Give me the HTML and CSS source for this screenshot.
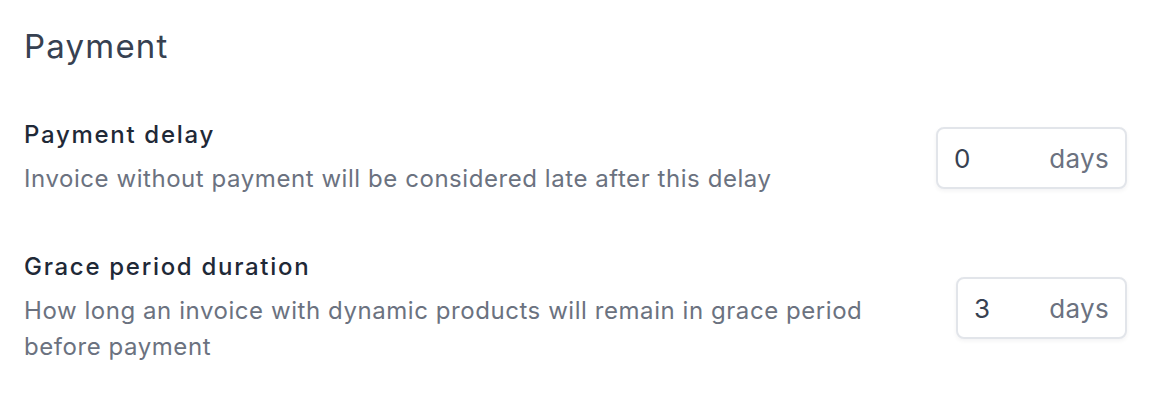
FILE: index.html
```html
<!DOCTYPE html>
<html lang="en">
<head>
<meta charset="utf-8">
<title>Payment settings</title>
<link rel="stylesheet" href="styles.css">
</head>
<body>
<section class="settings">
  <h2 class="settings__title">Payment</h2>
  <div class="settings__rows">
    <div class="setting">
      <div class="setting__text">
        <div class="setting__label">Payment delay</div>
        <p class="setting__desc">Invoice without payment will be considered late after this delay</p>
      </div>
      <div class="field field--wide">
        <span class="field__value">0</span>
        <span class="field__unit">days</span>
      </div>
    </div>
    <div class="setting">
      <div class="setting__text">
        <div class="setting__label">Grace period duration</div>
        <p class="setting__desc">How long an invoice with dynamic products will remain in grace period before payment</p>
      </div>
      <div class="field field--narrow">
        <span class="field__value">3</span>
        <span class="field__unit">days</span>
      </div>
    </div>
  </div>
</section>
</body>
</html>
```

FILE: styles.css
```css
* { box-sizing: border-box; }

html, body {
  margin: 0;
  background: #ffffff;
}

body {
  font-family: Inter, "Noto Sans", sans-serif;
  -webkit-font-smoothing: antialiased;
}

.settings {
  padding: 26px 39px 0 24px;
}

.settings__title {
  margin: 0;
  font-size: 33px;
  line-height: 40px;
  font-weight: 400;
  letter-spacing: 1.2px;
  color: #374151;
}

.settings__rows {
  display: flex;
  flex-direction: column;
  gap: 54px;
  margin-top: 53px;
}

.setting {
  display: flex;
  align-items: center;
  justify-content: space-between;
  gap: 24px;
}

.setting__text {
  flex: 0 1 880px;
  min-width: 0;
}

.setting__label {
  font-size: 24px;
  line-height: 32px;
  font-weight: 500;
  letter-spacing: 1.7px;
  color: #1f2937;
}

.setting__desc {
  margin: 10px 0 0;
  font-size: 24px;
  line-height: 36px;
  letter-spacing: 0.56px;
  color: #6b7280;
}

.field {
  flex: none;
  display: flex;
  align-items: center;
  justify-content: space-between;
  height: 62px;
  padding: 0 16px 0 16px;
  border: 2px solid #e2e5ea;
  border-radius: 8px;
  background: #ffffff;
  box-shadow: 0 2px 4px rgba(17, 24, 39, 0.05);
  font-size: 26px;
  letter-spacing: 0.3px;
}

.field--wide { width: 191px; }
.field--narrow { width: 171px; }

.field__value {
  color: #374151;
}

.field__unit {
  color: #6b7280;
}
```
